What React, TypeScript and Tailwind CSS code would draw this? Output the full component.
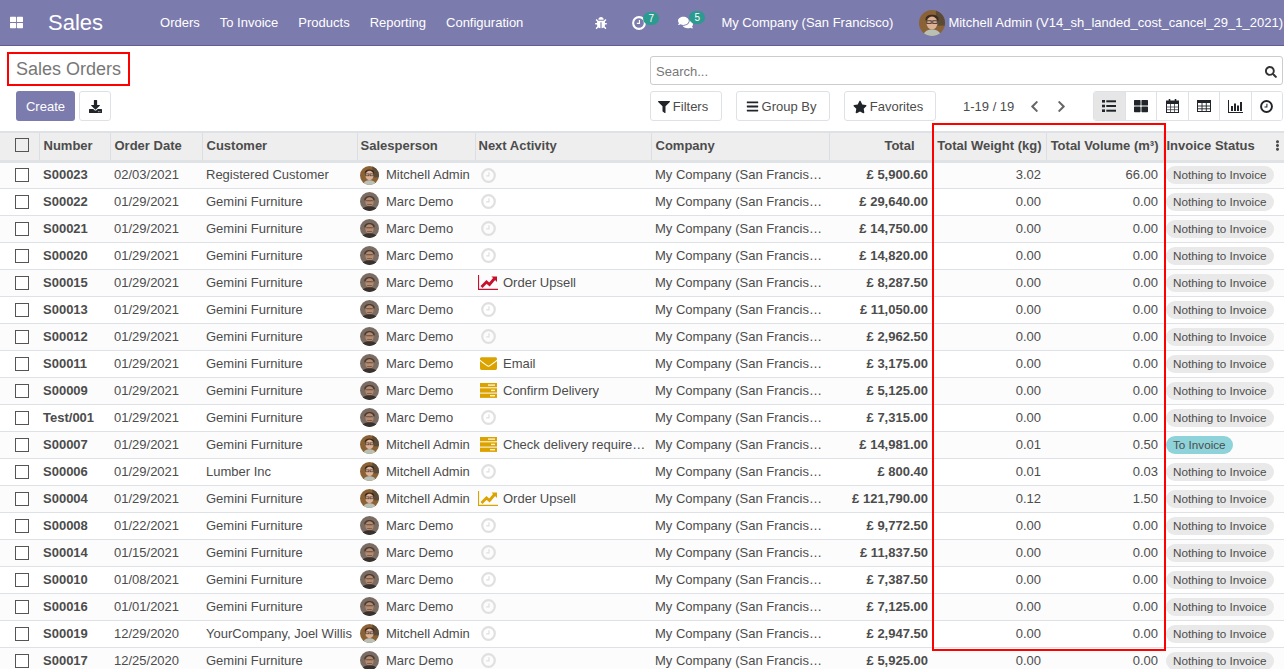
import {
  FaBars,
  FaBug,
  FaChevronLeft,
  FaChevronRight,
  FaComments,
  FaDownload,
  FaEllipsisV,
  FaEnvelope,
  FaFilter,
  FaSearch,
  FaStar,
  FaThLarge,
} from "react-icons/fa";
import type { ReactNode } from "react";

type Activity = { kind: "none" | "upsell" | "upsellLate" | "mail" | "task"; label?: string };
type Row = {
  num: string;
  date: string;
  customer: string;
  person: "Mitchell Admin" | "Marc Demo";
  activity: Activity;
  total: string;
  weight: string;
  volume: string;
  status?: string;
};

const none: Activity = { kind: "none" };

const rows: Row[] = [
  { num: "S00023", date: "02/03/2021", customer: "Registered Customer", person: "Mitchell Admin", activity: none, total: "£ 5,900.60", weight: "3.02", volume: "66.00" },
  { num: "S00022", date: "01/29/2021", customer: "Gemini Furniture", person: "Marc Demo", activity: none, total: "£ 29,640.00", weight: "0.00", volume: "0.00" },
  { num: "S00021", date: "01/29/2021", customer: "Gemini Furniture", person: "Marc Demo", activity: none, total: "£ 14,750.00", weight: "0.00", volume: "0.00" },
  { num: "S00020", date: "01/29/2021", customer: "Gemini Furniture", person: "Marc Demo", activity: none, total: "£ 14,820.00", weight: "0.00", volume: "0.00" },
  { num: "S00015", date: "01/29/2021", customer: "Gemini Furniture", person: "Marc Demo", activity: { kind: "upsellLate", label: "Order Upsell" }, total: "£ 8,287.50", weight: "0.00", volume: "0.00" },
  { num: "S00013", date: "01/29/2021", customer: "Gemini Furniture", person: "Marc Demo", activity: none, total: "£ 11,050.00", weight: "0.00", volume: "0.00" },
  { num: "S00012", date: "01/29/2021", customer: "Gemini Furniture", person: "Marc Demo", activity: none, total: "£ 2,962.50", weight: "0.00", volume: "0.00" },
  { num: "S00011", date: "01/29/2021", customer: "Gemini Furniture", person: "Marc Demo", activity: { kind: "mail", label: "Email" }, total: "£ 3,175.00", weight: "0.00", volume: "0.00" },
  { num: "S00009", date: "01/29/2021", customer: "Gemini Furniture", person: "Marc Demo", activity: { kind: "task", label: "Confirm Delivery" }, total: "£ 5,125.00", weight: "0.00", volume: "0.00" },
  { num: "Test/001", date: "01/29/2021", customer: "Gemini Furniture", person: "Marc Demo", activity: none, total: "£ 7,315.00", weight: "0.00", volume: "0.00" },
  { num: "S00007", date: "01/29/2021", customer: "Gemini Furniture", person: "Mitchell Admin", activity: { kind: "task", label: "Check delivery requirements" }, total: "£ 14,981.00", weight: "0.01", volume: "0.50", status: "To Invoice" },
  { num: "S00006", date: "01/29/2021", customer: "Lumber Inc", person: "Mitchell Admin", activity: none, total: "£ 800.40", weight: "0.01", volume: "0.03" },
  { num: "S00004", date: "01/29/2021", customer: "Gemini Furniture", person: "Mitchell Admin", activity: { kind: "upsell", label: "Order Upsell" }, total: "£ 121,790.00", weight: "0.12", volume: "1.50" },
  { num: "S00008", date: "01/22/2021", customer: "Gemini Furniture", person: "Marc Demo", activity: none, total: "£ 9,772.50", weight: "0.00", volume: "0.00" },
  { num: "S00014", date: "01/15/2021", customer: "Gemini Furniture", person: "Marc Demo", activity: none, total: "£ 11,837.50", weight: "0.00", volume: "0.00" },
  { num: "S00010", date: "01/08/2021", customer: "Gemini Furniture", person: "Marc Demo", activity: none, total: "£ 7,387.50", weight: "0.00", volume: "0.00" },
  { num: "S00016", date: "01/01/2021", customer: "Gemini Furniture", person: "Marc Demo", activity: none, total: "£ 7,125.00", weight: "0.00", volume: "0.00" },
  { num: "S00019", date: "12/29/2020", customer: "YourCompany, Joel Willis", person: "Mitchell Admin", activity: none, total: "£ 2,947.50", weight: "0.00", volume: "0.00" },
  { num: "S00017", date: "12/25/2020", customer: "Gemini Furniture", person: "Marc Demo", activity: none, total: "£ 5,925.00", weight: "0.00", volume: "0.00" },
];

function Face({ person, size }: { person: "Mitchell Admin" | "Marc Demo"; size: number }) {
  if (person === "Marc Demo") {
    return (
      <svg width={size} height={size} viewBox="0 0 20 20" className="shrink-0">
        <clipPath id="marc">
          <circle cx="10" cy="10" r="10" />
        </clipPath>
        <g clipPath="url(#marc)">
          <rect width="20" height="20" fill="#7a6c63" />
          <path d="M4.500 8c0-5 11-5 11 0v1h-11z" fill="#4a3b32" />
          <ellipse cx="10" cy="10.500" rx="4.300" ry="5" fill="#b58b70" />
          <rect x="6.500" y="8.800" width="7" height=".9" fill="#54413a" />
          <path d="M7.500 13.200h5" stroke="#6d4d3e" strokeWidth=".8" />
          <path d="M2 20c1-4 4-5 8-5s7 1 8 5z" fill="#38312d" />
        </g>
      </svg>
    );
  }
  return (
    <svg width={size} height={size} viewBox="0 0 20 20" className="shrink-0">
      <clipPath id={`mitchell${size}`}>
        <circle cx="10" cy="10" r="10" />
      </clipPath>
      <g clipPath={`url(#mitchell${size})`}>
        <rect width="20" height="20" fill="#8a6236" />
        <rect x="13" width="7" height="12" fill="#5b4a36" />
        <path d="M5 7c0-4.500 10-4.500 10 0v1H5z" fill="#3b2a1e" />
        <ellipse cx="10" cy="10" rx="4.300" ry="5" fill="#dcb195" />
        <rect x="6" y="8.300" width="3.400" height="2" fill="none" stroke="#40312a" strokeWidth=".7" />
        <rect x="10.600" y="8.300" width="3.400" height="2" fill="none" stroke="#40312a" strokeWidth=".7" />
        <path d="M3 20c1-4 4-5 7-5s6 1 7 5z" fill="#b9c0b5" />
      </g>
    </svg>
  );
}

function Check() {
  return <div className="ml-[15px] h-[14px] w-[14px] border border-[#555] bg-white" />;
}

// thick ring clock, fa-clock-o style
function ClockIcon({ size, className }: { size: number; className: string }) {
  return (
    <svg width={size} height={size} viewBox="0 0 16 16" fill="none" stroke="currentColor" className={className}>
      <circle cx="8" cy="8" r="6.700" strokeWidth="2.400" />
      <path d="M8.500 4.500v4h-3" strokeWidth="1.300" />
    </svg>
  );
}

function TaskIcon() {
  return (
    <svg width="17" height="15" viewBox="0 0 17 15">
      <rect width="17" height="4.300" y="0" fill="#dca300" />
      <rect width="17" height="4.300" y="5.300" fill="#dca300" />
      <rect width="17" height="4.300" y="10.600" fill="#dca300" />
      <rect x="8" y="1.400" width="7" height="1.400" fill="#fff3c4" />
      <rect x="11" y="6.700" width="4" height="1.400" fill="#fff3c4" />
      <rect x="10" y="12" width="5" height="1.400" fill="#fff3c4" />
    </svg>
  );
}

function LineChartIcon({ className }: { className: string }) {
  return (
    <svg width="20" height="15" viewBox="0 0 20 15" fill="none" stroke="currentColor" className={className}>
      <path d="M.500 0v14.300H20" strokeWidth="1.200" />
      <path d="M3.500 12l5-5 3 2.500 5-6" strokeWidth="2.800" />
      <path d="M13.500 1.500h5.500v5.500z" fill="currentColor" stroke="none" />
    </svg>
  );
}

function ListIcon() {
  return (
    <svg width="14" height="12" viewBox="0 0 14 12" fill="#212529">
      <rect y="0" width="3" height="2.600" />
      <rect y="4.700" width="3" height="2.600" />
      <rect y="9.400" width="3" height="2.600" />
      <rect x="4.300" y=".3" width="9.700" height="2" />
      <rect x="4.300" y="5" width="9.700" height="2" />
      <rect x="4.300" y="9.700" width="9.700" height="2" />
    </svg>
  );
}

function CalendarIcon() {
  return (
    <svg width="13" height="14" viewBox="0 0 13 14" fill="none" stroke="#212529">
      <rect x=".5" y="2" width="12" height="11.500" strokeWidth="1" />
      <rect x="0" y="2" width="13" height="3" fill="#212529" stroke="none" />
      <path d="M3.500 0v3M9.500 0v3" strokeWidth="1.600" />
      <path d="M4.500 5v8M8.500 5v8M.5 8h12M.5 10.700h12" strokeWidth=".7" />
    </svg>
  );
}

function TableIcon() {
  return (
    <svg width="14" height="12" viewBox="0 0 14 12" fill="none" stroke="#212529">
      <rect x=".5" y=".5" width="13" height="11" strokeWidth="1" />
      <rect x="0" y="0" width="14" height="3" fill="#212529" stroke="none" />
      <path d="M5 3v8.500M9.300 3v8.500M.5 6h13M.5 8.800h13" strokeWidth=".9" />
    </svg>
  );
}

function BarsIcon() {
  return (
    <svg width="15" height="13" viewBox="0 0 15 13" fill="#212529">
      <rect x="0" y="0" width="1" height="13" />
      <rect x="0" y="12" width="15" height="1" />
      <rect x="3" y="6" width="2" height="5" />
      <rect x="6" y="3.500" width="2" height="7.500" />
      <rect x="9" y="5.500" width="2" height="5.500" />
      <rect x="12" y="2" width="2" height="9" />
    </svg>
  );
}

function ActivityCell({ activity }: { activity: Activity }) {
  if (activity.kind === "none") {
    return (
      <div className="pl-[3px]">
        <ClockIcon size={15} className="text-[#e0e0e0]" />
      </div>
    );
  }
  let icon: ReactNode = <TaskIcon />;
  if (activity.kind === "mail") icon = <FaEnvelope className="text-[17px] text-[#dca300]" />;
  if (activity.kind === "upsell") icon = <LineChartIcon className="text-[#dca300]" />;
  if (activity.kind === "upsellLate") icon = <LineChartIcon className="text-[#c8102e]" />;
  return (
    <div className="flex items-center">
      <span className={`flex w-[25px] shrink-0 items-center ${activity.kind === "task" || activity.kind === "mail" ? "pl-[2px]" : ""}`}>{icon}</span>
      <span className="truncate">{activity.label}</span>
    </div>
  );
}

function Tool({ icon, label, className }: { icon: ReactNode; label: string; className: string }) {
  return (
    <button className={`flex h-[30px] items-center justify-center gap-[3px] rounded-[3px] border border-[#dee2e6] bg-white pt-[1px] text-[13px] text-[#4c4c4c] ${className}`}>
      <span className="text-[#212529]">{icon}</span>
      {label}
    </button>
  );
}

const headCell = "h-[29px] border-r border-[#dcdfe2] px-[4px] pb-[2px] text-left font-bold text-[#4c4c4c] truncate";
const cell = "pl-[4px] pr-[3px] truncate";

export default function App() {
  const views = [
    <ListIcon key="list" />,
    <FaThLarge key="kanban" className="text-[14px] text-[#212529]" />,
    <CalendarIcon key="cal" />,
    <TableIcon key="pivot" />,
    <BarsIcon key="graph" />,
    <ClockIcon key="activity" size={13} className="text-[#212529]" />,
  ];

  return (
    <div className="relative h-[669px] w-[1284px] overflow-hidden bg-white font-['Liberation_Sans',Arial,sans-serif] text-[13px] text-[#4c4c4c]">
      {/* top menu */}
      <nav className="flex h-[46px] items-center border-b border-[#5f5e97] bg-[#7c7bad] text-white">
        <FaThLarge className="ml-[10px] text-[13px]" />
        <span className="ml-[25px] text-[22px] leading-none">Sales</span>
        <div className="ml-[57px] flex gap-[20px]">
          <span>Orders</span>
          <span>To Invoice</span>
          <span>Products</span>
          <span>Reporting</span>
          <span>Configuration</span>
        </div>
        <div className="ml-auto flex items-center">
          <FaBug className="text-[12px]" />
          <span className="relative ml-[25px] mr-[32px]">
            <ClockIcon size={14} className="text-white" />
            <span className="absolute left-[11px] top-[-4px] rounded-full bg-[#2b9a8f] px-[5px] text-[10px] leading-[13px]">7</span>
          </span>
          <span className="relative mr-[28px]">
            <FaComments className="text-[15px]" />
            <span className="absolute left-[11px] top-[-4px] rounded-full bg-[#2b9a8f] px-[5px] text-[10px] leading-[13px]">5</span>
          </span>
          <span>My Company (San Francisco)</span>
          <span className="ml-[26px] mr-[3px]">
            <Face person="Mitchell Admin" size={26} />
          </span>
          <span className="pr-[1px]">Mitchell Admin (V14_sh_landed_cost_cancel_29_1_2021)</span>
        </div>
      </nav>

      {/* control panel */}
      <div className="flex h-[85px] justify-between">
        <div className="flex flex-col pl-[7px] pt-[6px]">
          <div className="flex h-[34px] w-[123px] items-center border-2 border-[#f00] pl-[7px] text-[18px] text-[#777]">
            Sales Orders
          </div>
          <div className="ml-[9px] mt-[5px] flex gap-[4px]">
            <button className="h-[30px] w-[59px] rounded-[3px] bg-[#7c7bad] pt-[1px] text-white">Create</button>
            <button className="flex h-[30px] w-[32px] items-center justify-center rounded-[3px] border border-[#dee2e6] bg-white text-[#212529]">
              <FaDownload className="text-[13px]" />
            </button>
          </div>
        </div>
        <div className="w-[634px] pr-[1px] pt-[10px]">
          <div className="flex h-[29px] items-center justify-between rounded-[3px] border border-[#ccc] pl-[5px] pr-[5px] pt-[2px]">
            <span className="text-[#777]">Search...</span>
            <FaSearch className="text-[12px] text-[#333]" />
          </div>
          <div className="mt-[6px] flex items-center">
            <Tool icon={<FaFilter className="text-[12px]" />} label="Filters" className="w-[72px] pr-[6px]" />
            <Tool icon={<FaBars className="text-[13px]" />} label="Group By" className="ml-[14px] w-[94px] pr-[4px]" />
            <Tool icon={<FaStar className="text-[14px]" />} label="Favorites" className="ml-[14px] w-[92px] pr-[4px]" />
            <span className="ml-[27px] pt-[1px]">1-19 / 19</span>
            <FaChevronLeft className="ml-[14px] text-[13px] text-[#666]" />
            <FaChevronRight className="ml-[14px] text-[13px] text-[#666]" />
            <div className="ml-auto flex h-[30px] w-[190px] overflow-hidden rounded-[3px] border border-[#dee2e6]">
              {views.map((icon, i) => (
                <span
                  key={i}
                  className={`flex flex-1 items-center justify-center border-r border-[#dee2e6] last:border-r-0 ${i === 0 ? "bg-[#e6e6e6]" : "bg-white"}`}
                >
                  {icon}
                </span>
              ))}
            </div>
          </div>
        </div>
      </div>

      {/* list */}
      <table className="w-[1284px] table-fixed border-collapse text-[13px]">
        <colgroup>
          <col className="w-[39px]" />
          <col className="w-[71px]" />
          <col className="w-[92px]" />
          <col className="w-[155px]" />
          <col className="w-[118px]" />
          <col className="w-[176px]" />
          <col className="w-[178px]" />
          <col className="w-[104px]" />
          <col className="w-[113px]" />
          <col className="w-[117px]" />
          <col className="w-[121px]" />
        </colgroup>
        <thead>
          <tr className="border-b-[3px] border-t-2 border-b-[#e0e3e6] border-t-[#dee2e6] bg-[#eeeeee]">
            <th className={headCell}>
              <div className="ml-[11px] h-[14px] w-[14px] border border-[#555] bg-[#eee]" />
            </th>
            <th className={headCell}>Number</th>
            <th className={headCell}>Order Date</th>
            <th className={headCell}>Customer</th>
            <th className={`${headCell} !pl-[3px]`}>Salesperson</th>
            <th className={`${headCell} !pl-[3px]`}>Next Activity</th>
            <th className={headCell}>Company</th>
            <th className={`${headCell} !pr-[18px] !text-right`}>Total</th>
            <th className={`${headCell} !pl-[1px] !text-right`}>Total Weight (kg)</th>
            <th className={`${headCell} !text-right`}>Total Volume (m³)</th>
            <th className="h-[29px] px-[3px] pb-[2px] text-left font-bold">
              <div className="flex items-center justify-between">
                Invoice Status
                <FaEllipsisV className="-mr-[2px] text-[11px]" />
              </div>
            </th>
          </tr>
        </thead>
        <tbody>
          {rows.map((r, i) => (
            <tr key={r.num} className={`h-[27px] border-b border-[#dee2e6] ${i % 2 === 0 ? "bg-[#fcfcfc]" : "bg-white"}`}>
              <td><Check /></td>
              <td className={`${cell} font-bold`}>{r.num}</td>
              <td className={cell}>{r.date}</td>
              <td className={cell}>{r.customer}</td>
              <td className="pl-[3px] pr-[2px]">
                <div className="flex items-center gap-[7px]">
                  <Face person={r.person} size={19} />
                  <span className="truncate">{r.person}</span>
                </div>
              </td>
              <td className="truncate px-[3px]">
                <ActivityCell activity={r.activity} />
              </td>
              <td className="truncate pl-[4px] pr-[7px]">My Company (San Francisco)</td>
              <td className={`${cell} !pr-[5px] text-right font-bold`}>{r.total}</td>
              <td className={`${cell} !pr-[5px] text-right`}>{r.weight}</td>
              <td className={`${cell} !pr-[5px] text-right`}>{r.volume}</td>
              <td className="px-[3px]">
                {r.status ? (
                  <span className="inline-block rounded-full bg-[#8ed3da] px-[7px] text-[11.7px] leading-[18px]">{r.status}</span>
                ) : (
                  <span className="inline-block rounded-full bg-[#e9e9e9] px-[7px] text-[11.7px] leading-[18px]">Nothing to Invoice</span>
                )}
              </td>
            </tr>
          ))}
        </tbody>
      </table>

      {/* highlight drawn over the list */}
      <div className="pointer-events-none absolute left-[932px] top-[123px] h-[528px] w-[234px] border-2 border-[#f00]" />
    </div>
  );
}
